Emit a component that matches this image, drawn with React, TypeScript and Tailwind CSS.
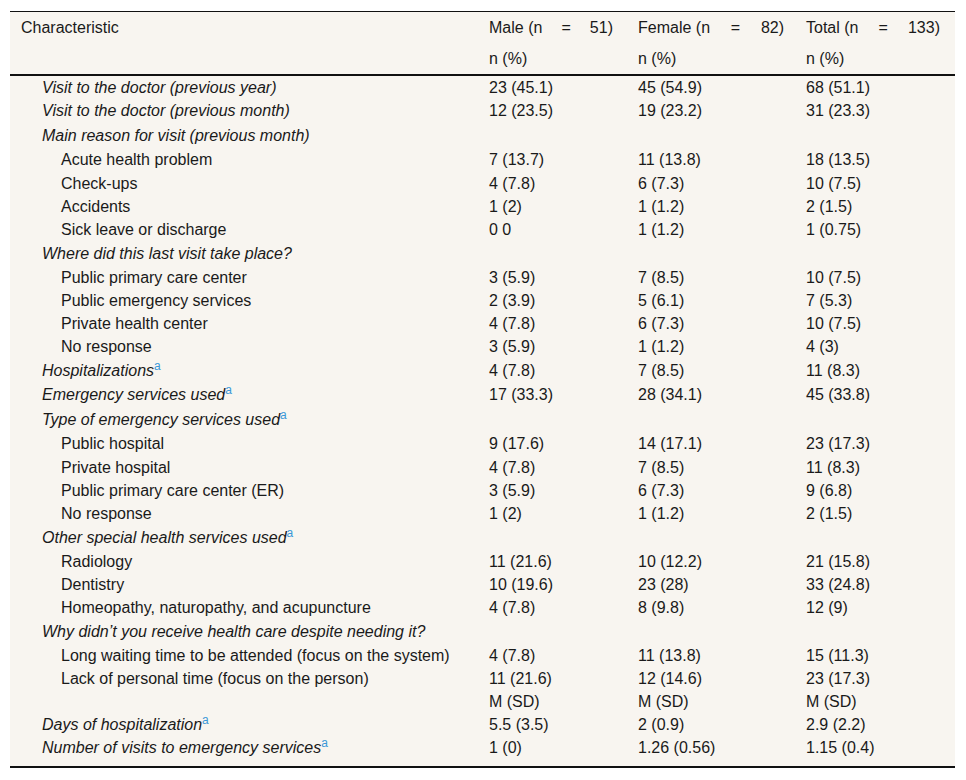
type Row = {
  label: string
  kind: 'group' | 'item' | 'plain'
  sup?: boolean
  h: string
  male: string
  female: string
  total: string
}

const rows: Row[] = [
  { label: 'Visit to the doctor (previous year)', kind: 'group', h: 'h-[23px]', male: '23 (45.1)', female: '45 (54.9)', total: '68 (51.1)' },
  { label: 'Visit to the doctor (previous month)', kind: 'group', h: 'h-[24px]', male: '12 (23.5)', female: '19 (23.2)', total: '31 (23.3)' },
  { label: 'Main reason for visit (previous month)', kind: 'group', h: 'h-[25px]', male: '', female: '', total: '' },
  { label: 'Acute health problem', kind: 'item', h: 'h-[24px]', male: '7 (13.7)', female: '11 (13.8)', total: '18 (13.5)' },
  { label: 'Check-ups', kind: 'item', h: 'h-[23px]', male: '4 (7.8)', female: '6 (7.3)', total: '10 (7.5)' },
  { label: 'Accidents', kind: 'item', h: 'h-[23px]', male: '1 (2)', female: '1 (1.2)', total: '2 (1.5)' },
  { label: 'Sick leave or discharge', kind: 'item', h: 'h-[23px]', male: '0 0', female: '1 (1.2)', total: '1 (0.75)' },
  { label: 'Where did this last visit take place?', kind: 'group', h: 'h-[25px]', male: '', female: '', total: '' },
  { label: 'Public primary care center', kind: 'item', h: 'h-[23px]', male: '3 (5.9)', female: '7 (8.5)', total: '10 (7.5)' },
  { label: 'Public emergency services', kind: 'item', h: 'h-[23px]', male: '2 (3.9)', female: '5 (6.1)', total: '7 (5.3)' },
  { label: 'Private health center', kind: 'item', h: 'h-[23px]', male: '4 (7.8)', female: '6 (7.3)', total: '10 (7.5)' },
  { label: 'No response', kind: 'item', h: 'h-[23px]', male: '3 (5.9)', female: '1 (1.2)', total: '4 (3)' },
  { label: 'Hospitalizations', kind: 'group', sup: true, h: 'h-[25px]', male: '4 (7.8)', female: '7 (8.5)', total: '11 (8.3)' },
  { label: 'Emergency services used', kind: 'group', sup: true, h: 'h-[24px]', male: '17 (33.3)', female: '28 (34.1)', total: '45 (33.8)' },
  { label: 'Type of emergency services used', kind: 'group', sup: true, h: 'h-[25px]', male: '', female: '', total: '' },
  { label: 'Public hospital', kind: 'item', h: 'h-[24px]', male: '9 (17.6)', female: '14 (17.1)', total: '23 (17.3)' },
  { label: 'Private hospital', kind: 'item', h: 'h-[23px]', male: '4 (7.8)', female: '7 (8.5)', total: '11 (8.3)' },
  { label: 'Public primary care center (ER)', kind: 'item', h: 'h-[23px]', male: '3 (5.9)', female: '6 (7.3)', total: '9 (6.8)' },
  { label: 'No response', kind: 'item', h: 'h-[23px]', male: '1 (2)', female: '1 (1.2)', total: '2 (1.5)' },
  { label: 'Other special health services used', kind: 'group', sup: true, h: 'h-[25px]', male: '', female: '', total: '' },
  { label: 'Radiology', kind: 'item', h: 'h-[23px]', male: '11 (21.6)', female: '10 (12.2)', total: '21 (15.8)' },
  { label: 'Dentistry', kind: 'item', h: 'h-[23px]', male: '10 (19.6)', female: '23 (28)', total: '33 (24.8)' },
  { label: 'Homeopathy, naturopathy, and acupuncture', kind: 'item', h: 'h-[23px]', male: '4 (7.8)', female: '8 (9.8)', total: '12 (9)' },
  { label: 'Why didn’t you receive health care despite needing it?', kind: 'group', h: 'h-[25px]', male: '', female: '', total: '' },
  { label: 'Long waiting time to be attended (focus on the system)', kind: 'item', h: 'h-[23px]', male: '4 (7.8)', female: '11 (13.8)', total: '15 (11.3)' },
  { label: 'Lack of personal time (focus on the person)', kind: 'item', h: 'h-[23px]', male: '11 (21.6)', female: '12 (14.6)', total: '23 (17.3)' },
  { label: '', kind: 'plain', h: 'h-[23px]', male: 'M (SD)', female: 'M (SD)', total: 'M (SD)' },
  { label: 'Days of hospitalization', kind: 'group', sup: true, h: 'h-[23px]', male: '5.5 (3.5)', female: '2 (0.9)', total: '2.9 (2.2)' },
  { label: 'Number of visits to emergency services', kind: 'group', sup: true, h: 'h-[24px]', male: '1 (0)', female: '1.26 (0.56)', total: '1.15 (0.4)' },
]

const grid = 'grid grid-cols-[469px_149px_168px_159px]'

function HeadCount({ label, n, width }: { label: string; n: string; width: string }) {
  return (
    <div className={`flex justify-between ${width}`}>
      <span>{label}</span>
      <span>=</span>
      <span>{n})</span>
    </div>
  )
}

export default function App() {
  return (
    <div className="min-h-screen bg-white pt-[11px] pl-[10px] text-[16px] text-[#1a1a1a] font-['Liberation_Sans',Arial,sans-serif]">
      <div className="w-[945px] bg-[#f8f5f0] border-t border-[#111] border-b-2 border-b-[#111] pb-[6px]">
        {/* Header */}
        <div className="border-b-2 border-[#111]">
          <div className={`${grid} h-[31px] items-center`}>
            <div className="pl-[11px]">Characteristic</div>
            <div className="pl-[10px]">
              <HeadCount label="Male (n" n="51" width="w-[124px]" />
            </div>
            <div className="pl-[10px]">
              <HeadCount label="Female (n" n="82" width="w-[146px]" />
            </div>
            <div className="pl-[10px]">
              <HeadCount label="Total (n" n="133" width="w-[134px]" />
            </div>
          </div>
          <div className={`${grid} h-[31px] items-center`}>
            <div />
            <div className="pl-[10px]">n (%)</div>
            <div className="pl-[10px]">n (%)</div>
            <div className="pl-[10px]">n (%)</div>
          </div>
        </div>

        {/* Body */}
        {rows.map((r, i) => (
          <div key={i} className={`${grid} ${r.h} items-center leading-none`}>
            <div className={r.kind === 'item' ? 'pl-[51px]' : 'pl-[32px]'}>
              <span className={r.kind === 'group' ? 'italic' : ''}>{r.label}</span>
              {r.sup && (
                <span className="relative -top-[6px] text-[12px] text-[#3a98d8]">a</span>
              )}
            </div>
            <div className="pl-[10px]">{r.male}</div>
            <div className="pl-[10px]">{r.female}</div>
            <div className="pl-[10px]">{r.total}</div>
          </div>
        ))}
      </div>
    </div>
  )
}
